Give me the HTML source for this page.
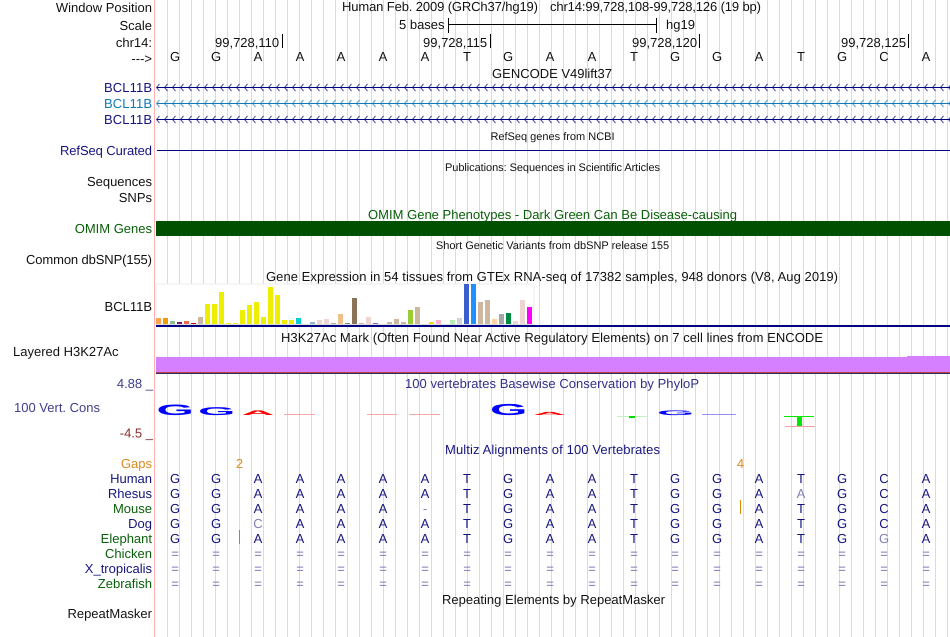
<!DOCTYPE html>
<html><head><meta charset="utf-8"><title>Genome Browser</title>
<style>
html,body{margin:0;padding:0;background:#fff;width:950px;height:637px;overflow:hidden}
#grid{position:absolute;left:167px;top:0;width:783px;height:637px;background:repeating-linear-gradient(90deg,#d8d8f4 0,#d8d8f4 1px,transparent 1px,transparent 12px)}
svg{position:absolute;left:0;top:0;display:block;font-family:"Liberation Sans",sans-serif;font-size:13px;text-rendering:geometricPrecision}
.r{text-anchor:end}.m{text-anchor:middle}.s{font-size:11px}
.n{fill:#14147f}.g{fill:#0a600a}.k{fill:#111}
</style></head><body>
<div id="grid"></div>
<svg width="950" height="637" viewBox="0 0 950 637" xmlns="http://www.w3.org/2000/svg">
<defs>
<path id="c" d="M159.5 -3.5 L156.5 0 L159.5 3.5" fill="none" stroke-width="1"/>
<g id="c5"><use href="#c"/><use href="#c" x="8"/><use href="#c" x="16"/><use href="#c" x="24"/><use href="#c" x="32"/></g>
<g id="c25"><use href="#c5"/><use href="#c5" x="40"/><use href="#c5" x="80"/><use href="#c5" x="120"/><use href="#c5" x="160"/></g>
<g id="c100"><use href="#c25"/><use href="#c25" x="200"/><use href="#c25" x="400"/><use href="#c25" x="600"/></g>
</defs>
<rect x="154" y="0" width="1" height="637" fill="#ffb0b0"/>

<!-- Labels -->
<g class="k">
<text class="r" x="152" y="12">Window Position</text>
<text class="r" x="152" y="30">Scale</text>
<text class="r" x="152" y="47">chr14:</text>
<text class="r" x="152" y="63">---&gt;</text>
<text class="r" x="152" y="186">Sequences</text>
<text class="r" x="152" y="202">SNPs</text>
<text x="26" y="264" textLength="126">Common dbSNP(155)</text>
<text class="r" x="152" y="311">BCL11B</text>
<text x="13" y="356">Layered H3K27Ac</text>
<text class="r" x="152" y="618">RepeatMasker</text>
</g>
<text class="n" x="104" y="92" textLength="48">BCL11B</text>
<text x="104" y="108" textLength="48" fill="#1279b8">BCL11B</text>
<text class="n" x="104" y="124" textLength="48">BCL11B</text>
<text class="n" x="60" y="155" textLength="92">RefSeq Curated</text>
<text class="r g" x="152" y="233">OMIM Genes</text>
<text x="14" y="412" fill="#40408f">100 Vert. Cons</text>
<text class="r" x="153" y="388" fill="#40408f">4.88 _</text>
<text class="r" x="153" y="437.5" fill="#8a3030">-4.5 _</text>

<!-- Header -->
<g class="k">
<text x="342" y="11" textLength="196">Human Feb. 2009 (GRCh37/hg19)</text>
<text x="550" y="11" textLength="211">chr14:99,728,108-99,728,126 (19 bp)</text>
<text x="399" y="29">5 bases</text>
<text x="666" y="29">hg19</text>
<text x="215" y="47">99,728,110</text>
<text x="423" y="47">99,728,115</text>
<text x="632" y="47">99,728,120</text>
<text x="841" y="47">99,728,125</text>
</g>
<path d="M449 24.5H657M448.5 18V33M656.5 18V33M282.5 34V48M490.5 34V48M699.5 34V48M908.5 34V48" stroke="#000" fill="none"/>
<text class="m k" x="175 216 258 300 341 383 425 467 508 550 592 634 675 717 759 801 842 884 926" y="61">GGAAAAATGAATGGATGCA</text>

<!-- Titles -->
<g class="k">
<text class="m" x="552" y="78">GENCODE V49lift37</text>
<text class="s m" x="552.5" y="140">RefSeq genes from NCBI</text>
<text class="s" x="445" y="171" textLength="215">Publications: Sequences in Scientific Articles</text>
<text class="s m" x="552.5" y="249">Short Genetic Variants from dbSNP release 155</text>
<text x="266" y="281" textLength="572">Gene Expression in 54 tissues from GTEx RNA-seq of 17382 samples, 948 donors (V8, Aug 2019)</text>
<text x="281" y="342" textLength="542">H3K27Ac Mark (Often Found Near Active Regulatory Elements) on 7 cell lines from ENCODE</text>
<text x="442" y="604" textLength="223">Repeating Elements by RepeatMasker</text>
</g>
<text class="g" x="368" y="219" textLength="369">OMIM Gene Phenotypes - Dark Green Can Be Disease-causing</text>
<text x="405" y="388" textLength="294" fill="#303088">100 vertebrates Basewise Conservation by PhyloP</text>
<text class="n" x="445" y="454" textLength="215">Multiz Alignments of 100 Vertebrates</text>

<!-- Genes -->
<rect x="157" y="87" width="793" height="1" fill="#000080"/>
<use href="#c100" y="87.5" stroke="#000080" opacity=".7"/>
<rect x="157" y="103" width="793" height="1" fill="#1279b8"/>
<use href="#c100" y="103.5" stroke="#1279b8" opacity=".7"/>
<rect x="157" y="119" width="793" height="1" fill="#000080"/>
<use href="#c100" y="119.5" stroke="#000080" opacity=".7"/>
<rect x="157" y="150" width="793" height="1" fill="#000080"/>
<rect x="156" y="221" width="794" height="15" fill="#005000"/>

<!-- GTEx -->
<rect x="156" y="284" width="378" height="41" fill="#fff" stroke="#eee"/>
<rect x="156" y="324" width="378" height="1" fill="#ddd"/>
<g>
<rect x="156" y="318" width="5" height="6" fill="#FFA54F"/>
<rect x="163" y="318" width="5" height="6" fill="#EE9A00"/>
<rect x="170" y="321" width="5" height="3" fill="#8FBC8F"/>
<rect x="177" y="322" width="5" height="2" fill="#8B1C62"/>
<rect x="184" y="321" width="5" height="3" fill="#EE6A50"/>
<rect x="191" y="323" width="5" height="1" fill="#CD0000"/>
<rect x="198" y="317" width="5" height="7" fill="#CDB79E"/>
<rect x="205" y="304" width="5" height="20" fill="#EEEE00"/>
<rect x="212" y="304" width="5" height="20" fill="#EEEE00"/>
<rect x="219" y="292" width="5" height="32" fill="#EEEE00"/>
<rect x="226" y="323" width="5" height="1" fill="#EEEE00"/>
<rect x="233" y="323" width="5" height="1" fill="#EEEE00"/>
<rect x="240" y="310" width="5" height="14" fill="#EEEE00"/>
<rect x="247" y="305" width="5" height="19" fill="#EEEE00"/>
<rect x="254" y="302" width="5" height="22" fill="#EEEE00"/>
<rect x="261" y="317" width="5" height="7" fill="#EEEE00"/>
<rect x="268" y="287" width="5" height="37" fill="#EEEE00"/>
<rect x="275" y="295" width="5" height="29" fill="#EEEE00"/>
<rect x="282" y="320" width="5" height="4" fill="#EEEE00"/>
<rect x="289" y="320" width="5" height="4" fill="#EEEE00"/>
<rect x="296" y="318" width="5" height="6" fill="#00CED1"/>
<rect x="310" y="322" width="5" height="2" fill="#8DB6CD"/>
<rect x="317" y="320" width="5" height="4" fill="#EED5D2"/>
<rect x="324" y="319" width="5" height="5" fill="#EED5D2"/>
<rect x="331" y="323" width="5" height="1" fill="#B4ACA0"/>
<rect x="338" y="314" width="5" height="10" fill="#F0C088"/>
<rect x="345" y="323" width="5" height="1" fill="#8B8378"/>
<rect x="352" y="298" width="5" height="26" fill="#8B7355"/>
<rect x="359" y="323" width="5" height="1" fill="#CDB79E"/>
<rect x="366" y="317" width="5" height="7" fill="#EED5D2"/>
<rect x="373" y="323" width="5" height="1" fill="#9060C0"/>
<rect x="387" y="322" width="5" height="2" fill="#CDB79E"/>
<rect x="394" y="319" width="5" height="5" fill="#CDB79E"/>
<rect x="401" y="322" width="5" height="2" fill="#CDB79E"/>
<rect x="408" y="310" width="5" height="14" fill="#9ACD32"/>
<rect x="415" y="307" width="5" height="17" fill="#CDB79E"/>
<rect x="429" y="322" width="5" height="2" fill="#FFD700"/>
<rect x="436" y="320" width="5" height="4" fill="#FFB5C5"/>
<rect x="450" y="320" width="5" height="4" fill="#B4EEB4"/>
<rect x="457" y="318" width="5" height="6" fill="#D3D3D3"/>
<rect x="464" y="284" width="5" height="40" fill="#3A5FCD"/>
<rect x="471" y="284" width="5" height="40" fill="#1E90FF"/>
<rect x="478" y="302" width="5" height="22" fill="#CDB79E"/>
<rect x="485" y="300" width="5" height="24" fill="#CDB79E"/>
<rect x="492" y="319" width="5" height="5" fill="#FFD39B"/>
<rect x="499" y="314" width="5" height="10" fill="#A6A6A6"/>
<rect x="506" y="313" width="5" height="11" fill="#008B45"/>
<rect x="513" y="321" width="5" height="3" fill="#EED5D2"/>
<rect x="520" y="300" width="5" height="24" fill="#EED5D2"/>
<rect x="527" y="307" width="5" height="17" fill="#FF00FF"/>
</g>
<rect x="156" y="325" width="794" height="2" fill="#000080"/>

<!-- Layered -->
<path d="M156 357H907V356H950V372H156Z" fill="#d580ff"/>
<rect x="156" y="372" width="794" height="1" fill="#c04040"/>
<rect x="156" y="373" width="794" height="1" fill="#303060"/>

<!-- PhyloP logos -->
<g font-size="16" font-weight="bold">
<text transform="translate(156.5,415) scale(3,.94)" fill="#00f">G</text>
<text transform="translate(198,415) scale(3,.7)" fill="#00f">G</text>
<text transform="translate(241.5,415) scale(2.85,.42)" fill="#f00">A</text>
<text transform="translate(490,415) scale(3,1)" fill="#00f">G</text>
<text transform="translate(533,415) scale(2.85,.28)" fill="#f00">A</text>
<text transform="translate(657,415) scale(3,.42)" fill="#00f">G</text>
</g>
<path d="M284 414.5h31M367 414.5h30M409 414.5h31" stroke="#f6a8a8" stroke-width="1"/>
<path d="M702 414.5h34" stroke="#9090ec"/>
<path d="M617 416.5h30" stroke="#c0f4c0"/>
<rect x="629" y="416" width="6" height="2" fill="#0d0"/>
<rect x="784" y="416" width="30" height="1" fill="#00e800"/>
<rect x="797" y="417" width="5" height="9" fill="#00e800"/>
<rect x="785" y="426" width="30" height="1" fill="#f0a0a0"/>

<!-- Multiz labels -->
<text class="r" x="152" y="468" fill="#e08a20">Gaps</text>
<text class="m" x="239.5" y="468" fill="#e08a20">2</text>
<text class="m" x="740.5" y="468" fill="#e08a20">4</text>
<g class="r">
<text class="n" x="152" y="483">Human</text>
<text class="n" x="152" y="498">Rhesus</text>
<text class="g" x="152" y="513">Mouse</text>
<text class="n" x="152" y="528">Dog</text>
<text class="g" x="152" y="543">Elephant</text>
<text class="g" x="152" y="558">Chicken</text>
<text class="n" x="152" y="573">X_tropicalis</text>
<text class="g" x="152" y="588">Zebrafish</text>
</g>
<g class="m n">
<text x="175 216 258 300 341 383 425 467 508 550 592 634 675 717 759 801 842 884 926" y="483">GGAAAAATGAATGGATGCA</text>
<text x="175 216 258 300 341 383 425 467 508 550 592 634 675 717 759 842 884 926" y="498">GGAAAAATGAATGGAGCA</text>
<text x="175 216 258 300 341 383 467 508 550 592 634 675 717 759 801 842 884 926" y="513">GGAAAATGAATGGATGCA</text>
<text x="175 216 300 341 383 425 467 508 550 592 634 675 717 759 801 842 884 926" y="528">GGAAAATGAATGGATGCA</text>
<text x="175 216 258 300 341 383 425 467 508 550 592 634 675 717 759 801 842 926" y="543">GGAAAAATGAATGGATGA</text>
</g>
<g class="m" fill="#8080b8">
<text x="801" y="498">A</text>
<text x="425" y="513">-</text>
<text x="258" y="528">C</text>
<text x="884" y="543">G</text>
<text x="175 216 258 300 341 383 425 467 508 550 592 634 675 717 759 801 842 884 926" y="558">===================</text>
<text x="175 216 258 300 341 383 425 467 508 550 592 634 675 717 759 801 842 884 926" y="573">===================</text>
<text x="175 216 258 300 341 383 425 467 508 550 592 634 675 717 759 801 842 884 926" y="588">===================</text>
</g>
<rect x="239" y="530" width="1" height="14" fill="#c08020"/>
<rect x="740" y="500" width="1" height="14" fill="#e08a00"/>
</svg>
</body></html>
